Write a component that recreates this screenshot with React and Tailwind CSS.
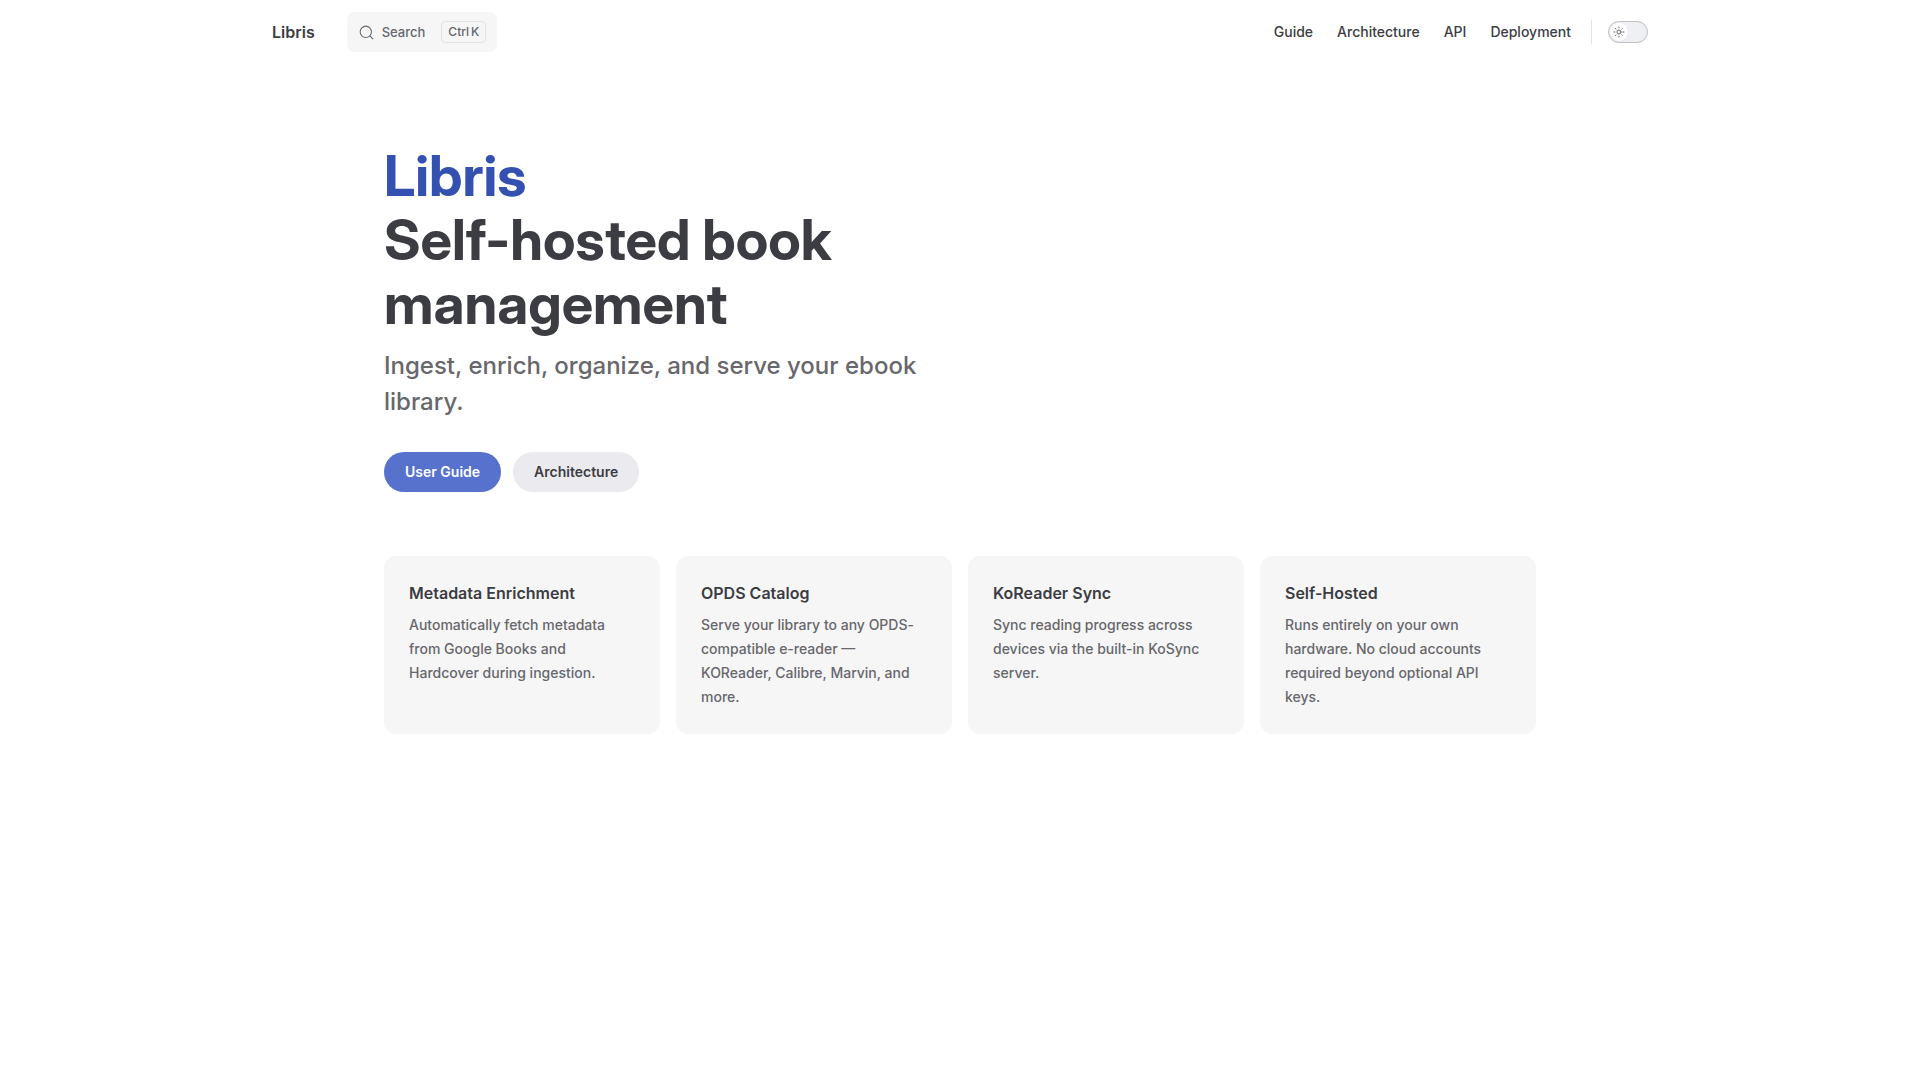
import { useState } from "react";
import { Sun } from "lucide-react";

const NAV_LINKS = ["Guide", "Architecture", "API", "Deployment"];

const FEATURES = [
  {
    title: "Metadata Enrichment",
    details:
      "Automatically fetch metadata from Google Books and Hardcover during ingestion.",
  },
  {
    title: "OPDS Catalog",
    details:
      "Serve your library to any OPDS-compatible e-reader — KOReader, Calibre, Marvin, and more.",
  },
  {
    title: "KoReader Sync",
    details:
      "Sync reading progress across devices via the built-in KoSync server.",
  },
  {
    title: "Self-Hosted",
    details:
      "Runs entirely on your own hardware. No cloud accounts required beyond optional API keys.",
  },
];

function SearchButton() {
  return (
    <button
      type="button"
      aria-label="Search"
      className="flex h-10 items-center rounded-lg bg-[#f6f6f7] pl-3 pr-[11px] text-[#67676c]"
    >
      <svg width="15" height="15" viewBox="0 0 20 20" fill="none" aria-hidden="true">
        <path
          d="M14.386 14.386l4.088 4.088-4.088-4.088c-2.942 2.942-7.711 2.942-10.653 0-2.942-2.942-2.942-7.711 0-10.653 2.942-2.942 7.711-2.942 10.653 0 2.942 2.942 2.942 7.711 0 10.653z"
          stroke="currentColor"
          strokeWidth="1.4"
          strokeLinecap="round"
          strokeLinejoin="round"
        />
      </svg>
      <span className="ml-2 text-[13px] font-medium leading-6">Search</span>
      <span className="ml-4 flex h-[22px] items-center gap-0.5 rounded border border-[#e2e2e3] px-1.5 text-xs font-medium">
        <kbd className="font-[inherit]">Ctrl</kbd>
        <kbd className="font-[inherit]">K</kbd>
      </span>
    </button>
  );
}

function ThemeSwitch() {
  const [dark, setDark] = useState(false);

  return (
    <button
      type="button"
      role="switch"
      aria-checked={dark}
      aria-label="Switch to dark theme"
      onClick={() => setDark(!dark)}
      className="h-[22px] w-10 rounded-full border border-[#c2c2c4] bg-[#eff0f3] p-px"
    >
      <span
        className={`flex size-[18px] items-center justify-center rounded-full bg-white shadow-xs transition-transform ${
          dark ? "translate-x-[18px]" : ""
        }`}
      >
        <Sun size={12} className="text-[#67676c]" />
      </span>
    </button>
  );
}

function Navbar() {
  return (
    <header className="px-8">
      <div className="mx-auto flex h-16 max-w-[1376px] items-center justify-between">
        <div className="flex items-center gap-8">
          <a href="#home" className="text-base font-semibold">
            Libris
          </a>
          <SearchButton />
        </div>

        <div className="flex items-center">
          <nav className="flex">
            {NAV_LINKS.map((link) => (
              <a
                key={link}
                href={`#${link.toLowerCase()}`}
                className="px-3 text-sm font-medium leading-[64px] hover:text-[#3451b2]"
              >
                {link}
              </a>
            ))}
          </nav>
          <div className="ml-2 mr-4 h-6 w-px bg-[#e2e2e3]" />
          <ThemeSwitch />
        </div>
      </div>
    </header>
  );
}

function Hero() {
  return (
    <section className="px-16 pb-16 pt-20">
      <div className="mx-auto max-w-6xl">
        <div className="max-w-xl">
          <h1 className="font-['Inter_Display','Inter',sans-serif] text-[56px] font-bold leading-[64px]">
            <span className="block text-[#3451b2]">Libris</span>
            <span className="block">Self-hosted book management</span>
          </h1>
          <p className="pt-3 text-2xl font-medium leading-9 text-[#67676c]">
            Ingest, enrich, organize, and serve your ebook library.
          </p>
          <div className="flex gap-3 pt-8">
            <a
              href="#guide"
              className="rounded-full border border-transparent bg-[#5672cd] px-5 text-sm font-semibold leading-[38px] text-white"
            >
              User Guide
            </a>
            <a
              href="#architecture"
              className="rounded-full border border-transparent bg-[#ebebef] px-5 text-sm font-semibold leading-[38px]"
            >
              Architecture
            </a>
          </div>
        </div>
      </div>
    </section>
  );
}

function Features() {
  return (
    <section className="px-16">
      <div className="mx-auto grid max-w-6xl grid-cols-2 gap-4 lg:grid-cols-4">
        {FEATURES.map(({ title, details }) => (
          <article
            key={title}
            className="rounded-xl border border-[#f6f6f7] bg-[#f6f6f7] p-6"
          >
            <h2 className="text-base font-semibold leading-6">{title}</h2>
            <p className="pt-2 text-sm font-medium leading-6 text-[#67676c]">
              {details}
            </p>
          </article>
        ))}
      </div>
    </section>
  );
}

export default function App() {
  return (
    <div className="min-h-screen bg-white font-['Inter',sans-serif] text-[#3c3c43] antialiased">
      <Navbar />
      <main>
        <Hero />
        <Features />
      </main>
    </div>
  );
}
